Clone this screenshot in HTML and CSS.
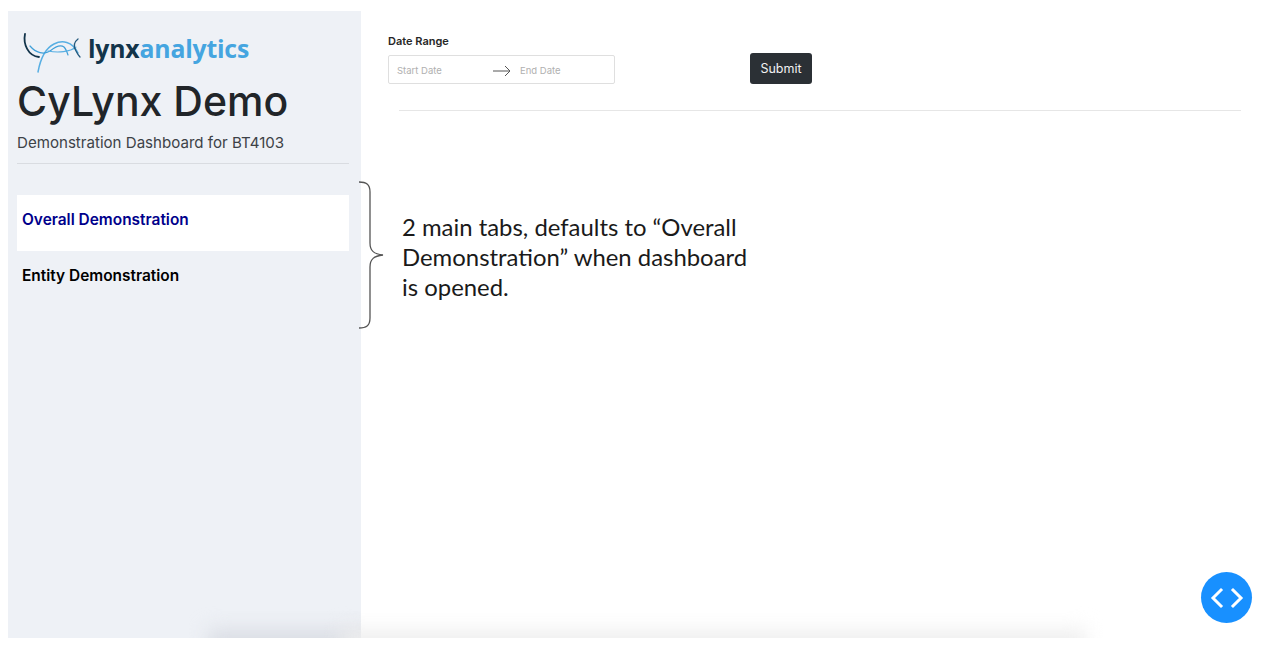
FILE: index.html
```html
<!DOCTYPE html>
<html lang="en">
<head>
<meta charset="utf-8">
<title>CyLynx Demo</title>
<link rel="stylesheet" href="styles.css">
</head>
<body>
<div class="app">
  <aside class="sidebar">
    <div class="logo">
      <svg class="logo-mark" width="60" height="44" viewBox="0 0 60 44" fill="none">
        <path d="M3 5C1 15 6 27 17 28" stroke="#12344a" stroke-width="1.8" stroke-linecap="round"/>
        <path d="M16 43C18 32 22 20 32 15C40 11 50 12 56 24" stroke="#58afe3" stroke-width="1.5" stroke-linecap="round"/>
        <path d="M8 17C14 24 22 26 28 22C33 18 38 15 42 18C44 20 45 23 46 26" stroke="#3f9fd8" stroke-width="1.2" stroke-linecap="round"/>
        <path d="M26 22C36 24 48 23 54 18" stroke="#58afe3" stroke-width="1.1" stroke-linecap="round"/>
        <path d="M56 10C52 13 51 17 54 22C55 24 56 26 58 28" stroke="#24597d" stroke-width="1.3" stroke-linecap="round"/>
      </svg>
      <span class="logo-text"><span class="logo-dark">lynx</span><span class="logo-blue">analytics</span></span>
    </div>
    <h1 class="title">CyLynx Demo</h1>
    <p class="subtitle">Demonstration Dashboard for BT4103</p>
    <hr class="side-rule">
    <nav class="tabs">
      <a class="tab tab-active">Overall Demonstration</a>
      <a class="tab">Entity Demonstration</a>
    </nav>
    <div class="side-shadow"></div>
  </aside>
  <main class="main">
    <form class="filters">
      <div class="date-field">
        <label class="date-label">Date Range</label>
        <div class="date-input">
          <span class="date-start">Start Date</span>
          <svg class="date-arrow" width="18" height="12" viewBox="0 0 18 12" fill="none"><path d="M0 6H17M12 1L17 6L12 11" stroke="#555" stroke-width="1"/></svg>
          <span class="date-end">End Date</span>
        </div>
      </div>
      <button class="submit" type="button">Submit</button>
    </form>
    <hr class="main-rule">
    <p class="note">2 main tabs, defaults to “Overall Demonstration” when dashboard is opened.</p>
    <div class="main-shadow"></div>
  </main>
</div>
<svg class="brace" width="28" height="148" viewBox="0 0 28 148" fill="none">
  <path d="M1 1C8 1 12 3 12 11V62C12 70 16 73 25 74C16 75 12 78 12 86V137C12 145 8 147 1 147" stroke="#555" stroke-width="1.3"/>
</svg>
<button class="fab" type="button" aria-label="Toggle code">
  <svg width="36" height="24" viewBox="0 0 36 24" fill="none"><path d="M12 4L4 12L12 20M24 4L32 12L24 20" stroke="#fff" stroke-width="3" stroke-linecap="square"/></svg>
</button>
</body>
</html>
```

FILE: styles.css
```css
* { box-sizing: border-box; }
html, body { margin: 0; height: 650px; overflow: hidden; background: #fff; }
body { font-family: Inter, "Liberation Sans", sans-serif; color: #212529; position: relative; }
.app { display: flex; height: 627px; margin: 11px 0 0 8px; overflow: hidden; }
.sidebar { position: relative; width: 353px; flex: none; background: #eef1f6; padding: 15px 12px 0 9px; overflow: hidden; }
.logo { display: flex; align-items: flex-start; height: 44px; padding-left: 5px; }
.logo-mark { flex: none; margin: 3px 6px 0 0; }
.logo-text { font-family: "Open Sans", sans-serif; font-weight: 700; font-size: 24.8px; letter-spacing: -0.2px; line-height: 44px; }
.logo-dark { color: #12344a; }
.logo-blue { color: #45a5e0; }
.title { margin: 6px 0 0; font-size: 41px; font-weight: 500; line-height: 50px; color: #212529; }
.subtitle { margin: 6px 0 0; font-size: 15.1px; line-height: 22px; color: #3d4247; }
.side-rule { margin: 9px 0 0; border: 0; border-top: 1px solid #d9dce1; }
.tabs { display: flex; flex-direction: column; margin-top: 31px; }
.tab { height: 55.5px; padding: 0 5px 6px; display: flex; align-items: center; font-size: 15.45px; font-weight: 600; color: #000; }
.tab-active { background: #fff; color: #00008b; }
.main { position: relative; flex: 1; padding: 23px 39px 0 27px; }
.filters { display: flex; align-items: flex-end; }
.date-field { width: 362px; flex: none; }
.date-label { display: block; font-size: 11px; font-weight: 600; line-height: 14px; margin-bottom: 7px; color: #262626; }
.date-input { display: flex; align-items: center; width: 227px; height: 29px; padding: 2px 8px 0; border: 1px solid #dfdfdf; border-radius: 2px; font-size: 9.5px; color: #b0b0b0; }
.date-start { width: 96px; }
.date-arrow { margin-right: 9px; }
.submit { width: 62px; height: 31px; padding: 0; border: 0; border-radius: 3px; background: #2b3035; color: #f2f2f2; font: 400 12.5px Inter, sans-serif; }
.main-rule { margin: 26px 0 0 11px; border: 0; border-top: 1px solid #e6e6e6; }
.note { margin: 101px 0 0 14px; width: 362px; font-family: Lato, sans-serif; font-size: 23.9px; line-height: 30px; color: #1a1a1a; }
.side-shadow, .main-shadow { position: absolute; bottom: -20px; height: 28px; filter: blur(10px); }
.side-shadow { left: 200px; right: -20px; background: #d9dce3; }
.main-shadow { left: -20px; width: 745px; background: #eeeeee; }
.brace { position: absolute; left: 358px; top: 181px; }
.fab { position: absolute; left: 1201px; top: 572px; width: 51px; height: 51px; border: 0; padding: 0; border-radius: 50%; background: #1890ff; display: flex; align-items: center; justify-content: center; }
```
